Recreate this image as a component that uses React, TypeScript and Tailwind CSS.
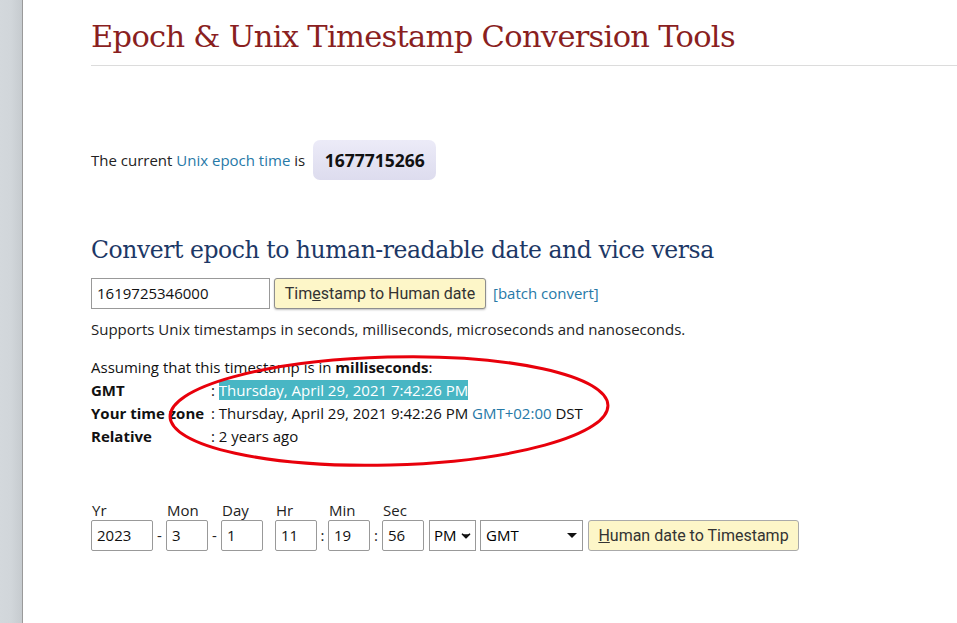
import { ChevronDown } from "lucide-react"

const body = "font-['Open_Sans',sans-serif]"

const Field = ({ label, value, w }: { label: string; value: string; w: string }) => (
    <div className="flex flex-col">
        <span className="h-[20px] pl-[1px] text-[15px] leading-[20px] text-[#222]">{label}</span>
        <div className={`flex h-[31px] items-center rounded-[2px] border border-[#999] bg-white px-[5px] text-[15px] text-[#111] ${w}`}>
            {value}
        </div>
    </div>
)

const Sep = ({ ch, w }: { ch: string; w: string }) => (
    <span className={`flex h-[31px] items-center justify-center self-end text-[15px] text-[#222] ${w}`}>{ch}</span>
)

export default function App() {
    return (
        <div className={`flex min-h-[623px] w-full bg-white ${body}`}>
            <div className="w-[23px] shrink-0 border-r border-[#9a9a9a] bg-gradient-to-r from-[#d3d8dc] via-[#d1d6da] to-[#c6cbcf]" />

            <div className="flex-1 pl-[68px]">
                <h1 className="pt-[17px] pb-[8px] font-['Roboto_Slab','DejaVu_Serif',serif] text-[30.5px] leading-[40px] tracking-[-0.7px] text-[#8a1f1f]">
                    Epoch &amp; Unix Timestamp Conversion Tools
                </h1>
                <div className="h-px bg-[#dcdcdc]" />

                <div className="mt-[74px] flex items-center text-[15px] text-[#222]">
                    <span>
                        The current <span className="text-[#2779a7]">Unix epoch time</span> is
                    </span>
                    <span className="ml-[8px] flex h-[40px] w-[123px] items-center justify-center rounded-[7px] bg-gradient-to-b from-[#ecebf8] to-[#dddcee] text-[17.5px] font-bold text-[#111]">
                        1677715266
                    </span>
                </div>

                <h2 className="mt-[55px] font-['DejaVu_Serif',serif] text-[23.5px] leading-[30px] tracking-[-0.45px] text-[#1d3866]">
                    Convert epoch to human-readable date and vice versa
                </h2>

                <div className="mt-[13px] flex items-center">
                    <div className="flex h-[31px] w-[179px] items-center border border-[#999] bg-white px-[5px] text-[15px] text-[#111]">
                        1619725346000
                    </div>
                    <button className="ml-[4px] h-[31px] w-[212px] rounded-[3px] border border-[#8e8e8e] bg-[#fdf6c8] font-['Roboto',sans-serif] text-[16px] text-[#333] shadow-[0_1px_2px_rgba(0,0,0,0.25)]">
                        Tim<span className="underline">e</span>stamp to Human date
                    </button>
                    <span className="ml-[7px] text-[15px] text-[#2779a7]">[batch convert]</span>
                </div>

                <p className="mt-[9px] text-[15px] leading-[22px] text-[#222]">
                    Supports Unix timestamps in seconds, milliseconds, microseconds and nanoseconds.
                </p>

                <div className="relative mt-[16px] text-[15px] leading-[23px] text-[#111]">
                    <div>
                        Assuming that this timestamp is in <b>milliseconds</b>:
                    </div>
                    <div className="grid grid-cols-[120px_1fr]">
                        <b>GMT</b>
                        <span>
                            : <span className="bg-[#48b6c4] text-white">Thursday, April 29, 2021 7:42:26 PM</span>
                        </span>
                        <b>Your time zone</b>
                        <span>
                            : Thursday, April 29, 2021 9:42:26 PM <span className="text-[#2779a7]">GMT+02:00</span> DST
                        </span>
                        <b>Relative</b>
                        <span>: 2 years ago</span>
                    </div>
                    <svg className="pointer-events-none absolute left-[75px] top-[-3px] h-[116px] w-[446px]" viewBox="0 0 446 116">
                        <ellipse cx="223" cy="58" rx="219" ry="54" fill="none" stroke="#e8000b" strokeWidth="3" transform="rotate(-1.5 223 58)" />
                    </svg>
                </div>

                <div className="mt-[52px] flex items-end">
                    <Field label="Yr" value="2023" w="w-[62px]" />
                    <Sep ch="-" w="w-[13px]" />
                    <Field label="Mon" value="3" w="w-[42px]" />
                    <Sep ch="-" w="w-[13px]" />
                    <Field label="Day" value="1" w="w-[42px]" />
                    <div className="w-[12px]" />
                    <Field label="Hr" value="11" w="w-[42px]" />
                    <Sep ch=":" w="w-[11px]" />
                    <Field label="Min" value="19" w="w-[42px]" />
                    <Sep ch=":" w="w-[12px]" />
                    <Field label="Sec" value="56" w="w-[42px]" />
                    <div className="ml-[5px] flex h-[31px] w-[47px] items-center justify-between border border-[#999] bg-white pl-[4px] pr-[2px] text-[15px]">
                        PM
                        <ChevronDown className="h-[14px] w-[14px] fill-[#111] stroke-[#111]" strokeWidth={3} />
                    </div>
                    <div className="ml-[4px] flex h-[31px] w-[103px] items-center justify-between border border-[#999] bg-white px-[5px] text-[15px]">
                        GMT
                        <span className="h-0 w-0 border-x-[5px] border-t-[5px] border-x-transparent border-t-[#111]" />
                    </div>
                    <button className="ml-[5px] h-[31px] w-[211px] rounded-[3px] border border-[#aaa] bg-[#fdf6c8] font-['Roboto',sans-serif] text-[16px] text-[#333]">
                        <span className="underline">H</span>uman date to Timestamp
                    </button>
                </div>
            </div>
        </div>
    )
}
